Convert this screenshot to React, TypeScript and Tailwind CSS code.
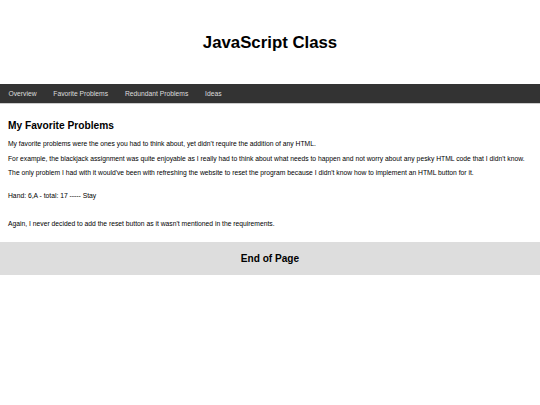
export default function App() {
  const font = { fontFamily: '"Liberation Sans", Arial, sans-serif' };
  return (
    <div className="w-[540px] min-h-[405px] bg-white text-black" style={font}>
      <header className="h-[84px] flex items-center justify-center">
        <h1 className="text-[16.8px] font-bold leading-[19px]">JavaScript Class</h1>
      </header>
      <nav className="h-[20px] bg-[#333333] border-b border-[#cccccc] flex items-center text-[6.75px] text-[#dddddd] leading-[8px]">
        <span className="px-[8.4px]">Overview</span>
        <span className="px-[8.4px]">Favorite Problems</span>
        <span className="px-[8.4px]">Redundant Problems</span>
        <span className="px-[8.4px]">Ideas</span>
      </nav>
      <main className="px-[8px]">
        <h2 className="mt-[15px] text-[10.2px] font-bold leading-[14px]">My Favorite Problems</h2>
        <p className="mt-[7px] text-[6.75px] leading-[8px]">My favorite problems were the ones you had to think about, yet didn't require the addition of any HTML.</p>
        <p className="mt-[6.5px] text-[6.75px] leading-[8px]">For example, the blackjack assignment was quite enjoyable as I really had to think about what needs to happen and not worry about any pesky HTML code that I didn't know.</p>
        <p className="mt-[6.5px] text-[6.75px] leading-[8px]">The only problem I had with it would've been with refreshing the website to reset the program because I didn't know how to implement an HTML button for it.</p>
        <p className="mt-[15px] text-[6.75px] leading-[8px]">Hand: 6,A - total: 17 ----- Stay</p>
        <p className="mt-[20px] text-[6.75px] leading-[8px]">Again, I never decided to add the reset button as it wasn't mentioned in the requirements.</p>
      </main>
      <footer className="mt-[14px] h-[33px] bg-[#dddddd] flex items-center justify-center">
        <span className="text-[10.1px] font-bold leading-[12px]">End of Page</span>
      </footer>
    </div>
  );
}
